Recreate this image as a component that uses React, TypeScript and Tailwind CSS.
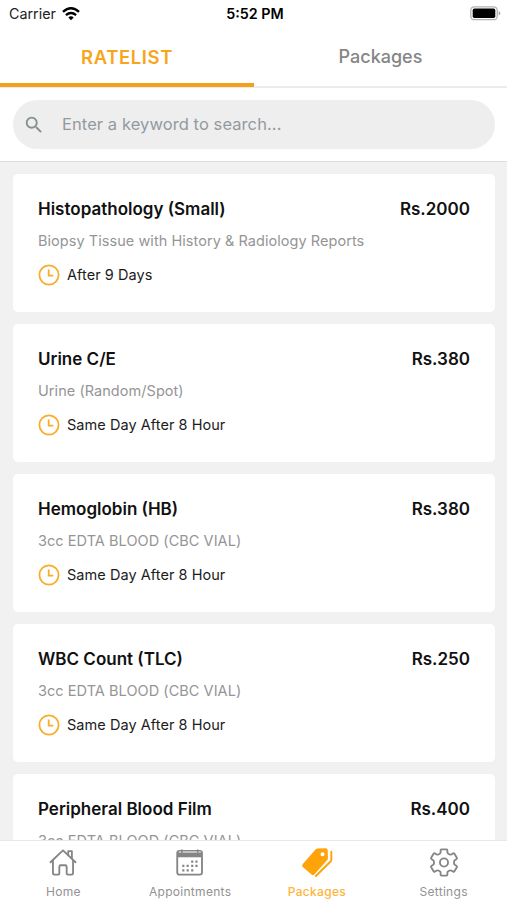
import type { ReactNode } from "react";
import { MdSearch } from "react-icons/md";

interface Test {
  name: string;
  price: string;
  sample: string;
  time: string;
}

const tests: Test[] = [
  {
    name: "Histopathology (Small)",
    price: "Rs.2000",
    sample: "Biopsy Tissue with History & Radiology Reports",
    time: "After 9 Days",
  },
  {
    name: "Urine C/E",
    price: "Rs.380",
    sample: "Urine (Random/Spot)",
    time: "Same Day After 8 Hour",
  },
  {
    name: "Hemoglobin (HB)",
    price: "Rs.380",
    sample: "3cc EDTA BLOOD (CBC VIAL)",
    time: "Same Day After 8 Hour",
  },
  {
    name: "WBC Count (TLC)",
    price: "Rs.250",
    sample: "3cc EDTA BLOOD (CBC VIAL)",
    time: "Same Day After 8 Hour",
  },
  {
    name: "Peripheral Blood Film",
    price: "Rs.400",
    sample: "3cc EDTA BLOOD (CBC VIAL)",
    time: "Same Day After 8 Hour",
  },
];

const HomeIcon = () => (
  <svg width="30" height="30" viewBox="0 0 30 30" fill="none" stroke="currentColor" strokeWidth="1.9" strokeLinejoin="round" strokeLinecap="round">
    <path d="M2 14.7 15 2.5l13 12.2" />
    <path d="M4.6 13v13.2q0 1.4 1.4 1.4h4q1.2 0 1.2-1.2v-7q0-1.6 1.6-1.6h4.4q1.6 0 1.6 1.6v7q0 1.2 1.2 1.2h4q1.4 0 1.4-1.4V13" />
    <path d="M20.4 7V3.3h3.8v7.3" />
  </svg>
);

const CalendarIcon = () => (
  <svg width="30" height="30" viewBox="0 0 30 30" fill="none" stroke="currentColor">
    <rect x="1.8" y="3" width="25.6" height="24.6" rx="2.2" strokeWidth="1.9" />
    <path d="M2.5 4.2h24.6v5.4H2.5z" fill="currentColor" stroke="none" />
    <path d="M3.5 4.1h22.6" stroke="#c4c4c4" strokeWidth="2" />
    <path d="M6.6 1.6v3.4M23 1.6v3.4" strokeWidth="1.7" />
    <path d="M16.2 14h2.2M20.6 14h2.2M7 18.6h2.2M11.5 18.6h2.2M16.2 18.6h2.2M20.6 18.6h2.2M7 23.1h2.2M11.5 23.1h2.2M16.2 23.1h2.2" strokeWidth="2.3" />
  </svg>
);

const TagsIcon = () => (
  <svg width="34" height="30" viewBox="0 0 34 30" fill="currentColor">
    <path
      fillRule="evenodd"
      d="M17.5.5 26 .2q2 0 2.1 2l.2 8.4q0 1.3-.9 2.2L14.200 27.500q-1.400 1.400-2.800 0l-9.100-7.900q-1.500-1.500 0-3L15.500 1.500Q16.500.6 17.500.5ZM22.700 4.300a2.100 2.100 0 1 0 0 4.200 2.100 2.100 0 0 0 0-4.200Z"
    />
    <path d="M31.800 3.800v8.400q0 1-.8 1.800L15.800 29" fill="none" stroke="currentColor" strokeWidth="2" strokeLinecap="round" />
  </svg>
);

const GearIcon = () => (
  <svg width="30" height="30" viewBox="0 0 30 30" fill="none" stroke="currentColor" strokeWidth="1.9" strokeLinejoin="round">
    <path d="M12.3 1.5h5.4q.8 0 .8.8v2.2q0 1 .9 1.4l1.500.8q.8.400 1.600 0l2-1.100q.8-.4 1.300.3l2.500 4.200q.4.800-.3 1.300l-1.800 1.200q-.8.600-.8 1.400v2q0 .8.800 1.400l1.800 1.200q.7.500.3 1.300l-2.500 4.200q-.5.700-1.300.3l-2-1.100q-.8-.4-1.600 0l-1.500.8q-.9.400-.9 1.400v2.200q0 .8-.8.800h-5.400q-.8 0-.8-.8v-2.200q0-1-.9-1.400l-1.500-.8q-.8-.4-1.600 0l-2 1.100q-.8.400-1.300-.3l-2.500-4.200q-.4-.8.300-1.300l1.800-1.200q.8-.6.800-1.400v-2q0-.8-.8-1.400l-1.800-1.200q-.7-.5-.3-1.300l2.500-4.200q.5-.7 1.300-.3l2 1.100q.8.400 1.600 0l1.500-.8q.9-.4.9-1.400v-2.200q0-.8.8-.8Z" />
    <circle cx="15" cy="15" r="4.2" />
  </svg>
);

const ClockIcon = () => (
  <svg width="22" height="22" viewBox="0 0 22 22" fill="none" stroke="#faac2b" strokeWidth="1.8">
    <circle cx="11" cy="11" r="9.6" />
    <path d="M10.7 5.500v6.100h4.600" />
  </svg>
);

const WifiIcon = () => (
  <svg width="18" height="14" viewBox="0 0 18 14" fill="none" stroke="#000" strokeWidth="2.4">
    <path d="M1 4.8Q9-2.3 17 4.800" />
    <path d="M3.9 8.1q5.100-4.200 10.200 0" />
    <path d="M6.3 10.4Q9 8.2 11.7 10.4L9 13.3Z" fill="#000" stroke="none" />
  </svg>
);

const BatteryIcon = () => (
  <svg width="31" height="15" viewBox="0 0 31 15">
    <rect x=".8" y=".8" width="26.4" height="12.9" rx="3.5" fill="#fff" stroke="#b2b2b2" strokeWidth="1.3" />
    <rect x="2.7" y="2.6" width="22.6" height="9.3" rx="1.6" />
    <path d="M28.7 5v4.6q1.6-.8 1.6-2.3T28.7 5Z" fill="#a3a3a3" />
  </svg>
);

const TestCard = ({ name, price, sample, time }: Test) => (
  <div className="h-[138px] shrink-0 rounded-[5px] bg-white px-[25px] pt-[23px]">
    <div className="flex justify-between text-[17px] leading-6 font-semibold text-[#111]">
      <h3>{name}</h3>
      <span>{price}</span>
    </div>
    <p className="mt-[10px] text-[14.5px] leading-5 tracking-[0.05px] text-[#959595]">{sample}</p>
    <div className="mt-[13px] flex items-center gap-[7px] text-[14.5px] leading-[22px] tracking-[0.05px] text-[#1c1c1c]">
      <ClockIcon />
      <span>{time}</span>
    </div>
  </div>
);

const NavItem = ({ label, active, children }: { label: string; active?: boolean; children: ReactNode }) => (
  <button className={`flex flex-1 flex-col items-center pt-[7px] ${active ? "text-[#ffa30a]" : "text-[#858585]"}`}>
    {children}
    <span className={`mt-[7px] text-[12px] leading-4 tracking-[0.3px] ${active ? "font-medium text-[#ffb43c]" : "text-[#929292]"}`}>
      {label}
    </span>
  </button>
);

const App = () => {
  return (
    <div className="flex h-[900px] w-[507px] flex-col overflow-hidden bg-[#f1f1f1] font-['Inter',sans-serif]">
      {/* Status bar */}
      <div className="grid h-[27px] shrink-0 grid-cols-3 items-center bg-white pr-[6px] pl-[9px] text-[14.3px] text-[#222]">
        <div className="flex items-center gap-[6px]">
          <span>Carrier</span>
          <WifiIcon />
        </div>
        <span className="text-center font-semibold text-black">5:52 PM</span>
        <div className="flex justify-end">
          <BatteryIcon />
        </div>
      </div>

      {/* Tabs */}
      <div className="flex h-[61px] shrink-0 border-b-2 border-[#ececec] bg-white">
        <button className="h-[60px] w-[254px] border-b-4 border-[#f5a01a] pt-[5px] text-[18.5px] font-semibold tracking-[0.6px] text-[#f8a51b]">
          RATELIST
        </button>
        <button className="h-[60px] flex-1 pb-px text-[18px] font-medium text-[#858585]">Packages</button>
      </div>

      {/* Search */}
      <div className="h-[74px] shrink-0 border-b border-[#dedede] bg-white pr-3 pl-[13px] pt-3">
        <div className="flex h-[49px] items-center rounded-full bg-[#eee] pl-[10px]">
          <MdSearch size={22} color="#868e92" />
          <span className="pl-[17px] text-[16.5px] tracking-[0.08px] text-[#939a9f]">Enter a keyword to search...</span>
        </div>
      </div>

      {/* Rate list */}
      <div className="flex min-h-0 flex-1 flex-col gap-[11.9px] overflow-hidden pr-3 pl-[13px] pt-[12.3px]">
        {tests.map((test) => (
          <TestCard key={test.name} {...test} />
        ))}
      </div>

      {/* Bottom navigation */}
      <nav className="flex h-[60px] shrink-0 border-t border-[#e8e8e8] bg-white">
        <NavItem label="Home">
          <HomeIcon />
        </NavItem>
        <NavItem label="Appointments">
          <CalendarIcon />
        </NavItem>
        <NavItem label="Packages" active>
          <TagsIcon />
        </NavItem>
        <NavItem label="Settings">
          <GearIcon />
        </NavItem>
      </nav>
    </div>
  );
};

export default App;
